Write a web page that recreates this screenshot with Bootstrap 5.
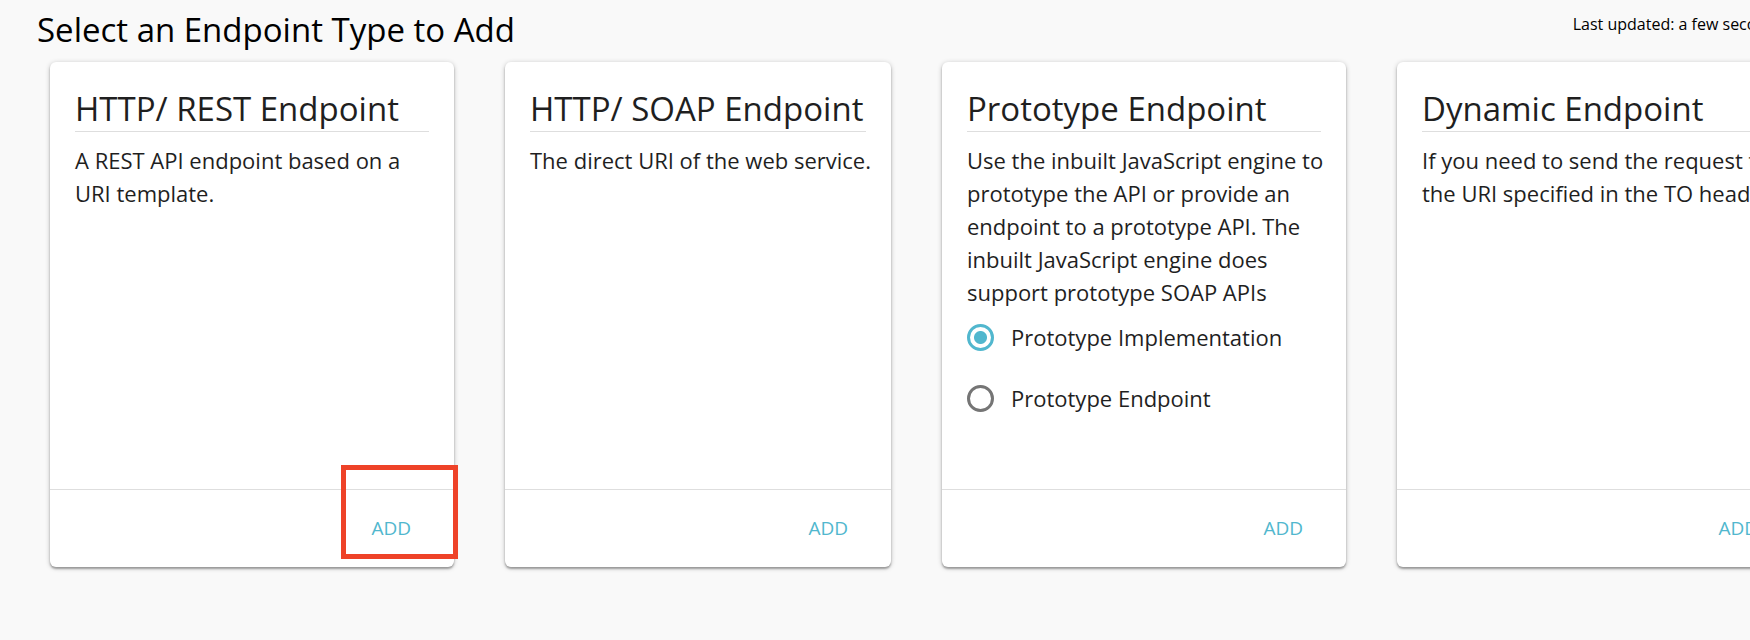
<!DOCTYPE html>
<html lang="en">
<head>
<meta charset="utf-8">
<meta name="viewport" content="width=device-width, initial-scale=1">
<title>Endpoints</title>
<link href="https://cdn.jsdelivr.net/npm/bootstrap@5.3.0/dist/css/bootstrap.min.css" rel="stylesheet">
<style>
  body { background: #f9f9f9; color: #000; font-family: "Open Sans", "Noto Sans", sans-serif; font-size: 22px; line-height: 33px; }
  .endpoint-page { width: max-content; min-width: 100%; }
  .page-head { padding: 8px 36px 10px 37px; }
  .page-head h1 { font-size: 33px; line-height: 44px; font-weight: 400; }
  .updated { font-size: 16px; line-height: 32px; }
  .endpoint-row { padding: 0 50px 48px; gap: 51px; }
  .endpoint-card { width: max-content; max-width: 404px; min-height: 505px; border: 0; border-radius: 6px; color: #1f1f1f;
    box-shadow: 0 2px 2px rgba(0,0,0,.28), 0 1px 5px rgba(0,0,0,.24); }
  .endpoint-card .card-body { padding: 25px 20px 16px 25px; }
  .endpoint-card h2 { font-size: 33px; line-height: 44px; font-weight: 400; border-bottom: 1px solid #dedede; margin: 0 5px 12px 0; }
  .endpoint-card .card-footer { background: transparent; border-top: 1px solid #dedede; padding: 16px 27px 17px; }
  .add-btn { color: #51b7ce; font-size: 19px; font-weight: 500; line-height: 28px; padding: 8px 16px; border: 0; }
  .type-list { gap: 5px; }
  .type-choice { gap: 17px; height: 56px; }
  .type-choice .form-check-input { width: 27px; height: 27px; margin: 0; border: 3px solid #757575; background: #fff; }
  .type-choice .form-check-input:checked { border-color: #51b7ce; background: radial-gradient(circle, #51b7ce 6px, #fff 7px); }
  .callout-frame { width: 117px; height: 94px; right: -4px; bottom: 8px; border: 5px solid #ee4228; pointer-events: none; }
</style>
</head>
<body class="overflow-hidden">
<main class="endpoint-page">
  <header class="page-head d-flex justify-content-between align-items-start">
    <h1 class="m-0">Select an Endpoint Type to Add</h1>
    <span class="updated">Last updated: a few seconds ago</span>
  </header>
  <div class="endpoint-row d-flex align-items-stretch">
    <section class="card endpoint-card flex-shrink-0">
      <div class="card-body">
        <h2>HTTP/ REST Endpoint</h2>
        <p class="m-0">A REST API endpoint based on a URI template.</p>
      </div>
      <div class="card-footer text-end"><button type="button" class="btn add-btn">ADD</button></div>
      <div class="callout-frame position-absolute"></div>
    </section>
    <section class="card endpoint-card flex-shrink-0">
      <div class="card-body">
        <h2>HTTP/ SOAP Endpoint</h2>
        <p class="m-0">The direct URI of the web service.</p>
      </div>
      <div class="card-footer text-end"><button type="button" class="btn add-btn">ADD</button></div>
    </section>
    <section class="card endpoint-card flex-shrink-0">
      <div class="card-body">
        <h2>Prototype Endpoint</h2>
        <p class="m-0">Use the inbuilt JavaScript engine to prototype the API or provide an endpoint to a prototype API. The inbuilt JavaScript engine does support prototype SOAP APIs</p>
        <div class="type-list d-flex flex-column">
          <div class="type-choice d-flex align-items-center">
            <input class="form-check-input" type="radio" name="prototype" id="implementation" checked>
            <label for="implementation">Prototype Implementation</label>
          </div>
          <div class="type-choice d-flex align-items-center">
            <input class="form-check-input" type="radio" name="prototype" id="prototype-endpoint">
            <label for="prototype-endpoint">Prototype Endpoint</label>
          </div>
        </div>
      </div>
      <div class="card-footer text-end"><button type="button" class="btn add-btn">ADD</button></div>
    </section>
    <section class="card endpoint-card flex-shrink-0">
      <div class="card-body">
        <h2>Dynamic Endpoint</h2>
        <p class="m-0">If you need to send the request to the URI specified in the TO header.</p>
      </div>
      <div class="card-footer text-end"><button type="button" class="btn add-btn">ADD</button></div>
    </section>
  </div>
</main>
<script src="https://cdn.jsdelivr.net/npm/bootstrap@5.3.0/dist/js/bootstrap.bundle.min.js"></script>
</body>
</html>
